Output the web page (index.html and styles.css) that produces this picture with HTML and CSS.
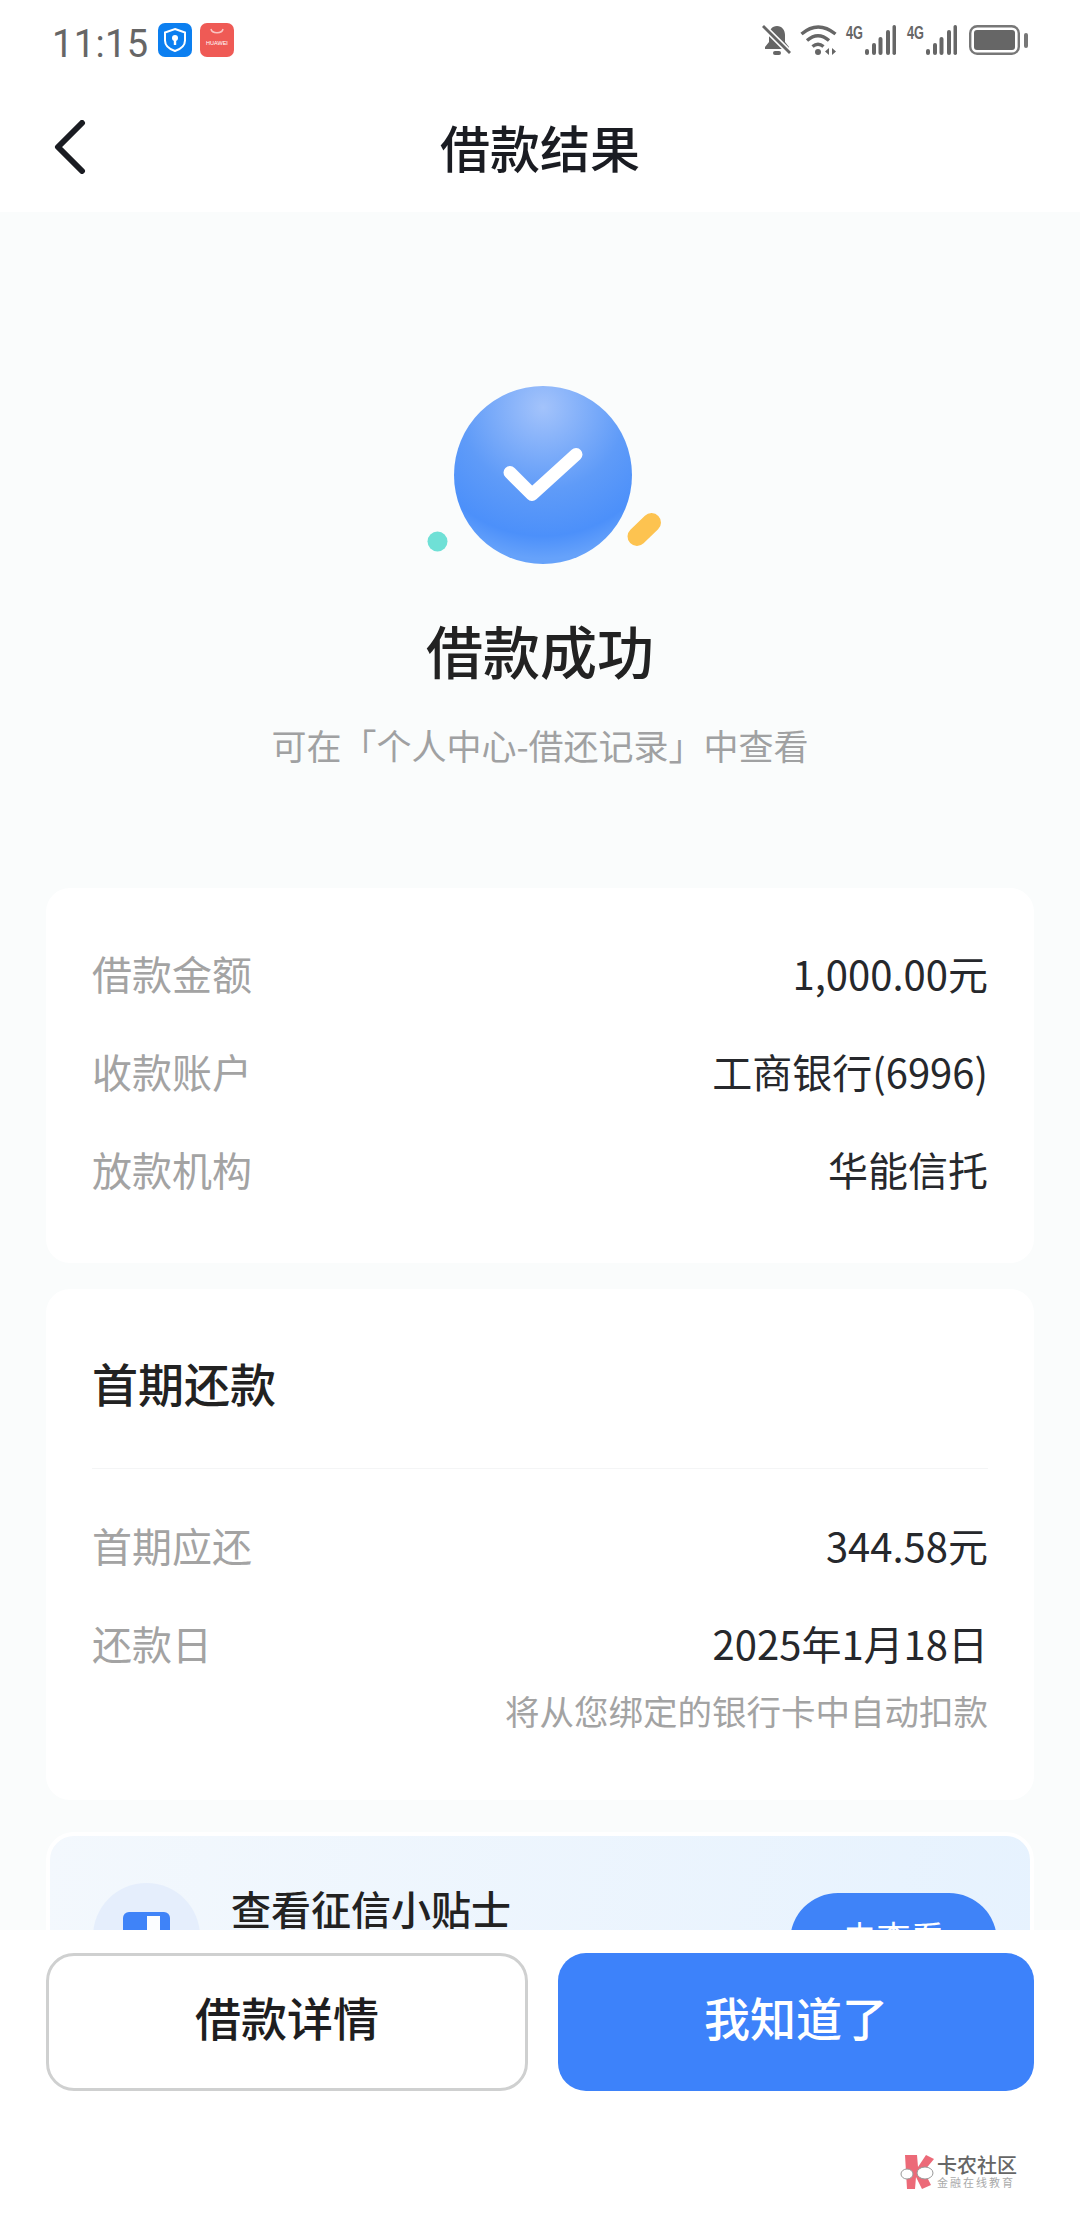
FILE: index.html
```html
<!DOCTYPE html>
<html lang="zh">
<head>
<meta charset="utf-8">
<title>借款结果</title>
<link rel="stylesheet" href="styles.css">
</head>
<body>
<div class="phone">
  <header class="top">
    <div class="status">
      <div class="status-left">
        <span class="time">11:15</span>
        <svg class="app" viewBox="0 0 34 34"><rect width="34" height="34" rx="7" fill="#0c7ff0"/><path d="M17 6l10 3.500v8c0 5-4 8.500-10 10.500C11 26 7 22.500 7 17.500v-8z" fill="none" stroke="#fff" stroke-width="2"/><circle cx="17" cy="15" r="3" fill="#fff"/><rect x="15.800" y="15" width="2.400" height="7" fill="#fff"/></svg>
        <svg class="app" viewBox="0 0 34 34"><rect width="34" height="34" rx="7" fill="#ef5a55"/><path d="M11 6c1 5 11 5 12 0" fill="none" stroke="#f9c4c1" stroke-width="1.500"/><text x="17" y="22" class="hw">HUAWEI</text></svg>
      </div>
      <div class="status-right">
        <svg class="ic-bell" viewBox="0 0 30 30"><path d="M15 1c5 0 8 4 8 9v7l4 5v2H3v-2l4-5v-7c0-5 3-9 8-9z" fill="#666"/><rect x="11" y="26" width="8" height="4" rx="2" fill="#666"/><path d="M1 1l27 27" stroke="#fff" stroke-width="6"/><path d="M1 1l27 27" stroke="#666" stroke-width="2.800"/></svg>
        <svg class="ic-wifi" viewBox="0 0 38 30"><path d="M1.500 9Q18-5 35.500 9M7 15.500Q18 6 29 15.500M12.500 21.500Q18 17 23.500 21.500" fill="none" stroke="#666" stroke-width="3.400"/><circle cx="18" cy="27" r="3" fill="#666"/><path d="M29 23v7l-4-3.500zM32 23v7l4-3.500z" fill="#666"/></svg>
        <svg class="ic-sig" viewBox="0 0 50 30"><text x="0" y="14" class="four" textLength="17" lengthAdjust="spacingAndGlyphs">4G</text><rect x="19" y="24" width="4" height="6" rx="2" fill="#666"/><rect x="26" y="18" width="4" height="12" rx="2" fill="#666"/><rect x="32.500" y="12" width="4" height="18" rx="2" fill="#666"/><rect x="40" y="5" width="4" height="25" rx="2" fill="#666"/><rect x="46.500" y="0" width="3.500" height="30" rx="1.700" fill="#666"/></svg>
        <svg class="ic-sig ic-sig-2" viewBox="0 0 50 30"><text x="0" y="14" class="four" textLength="17" lengthAdjust="spacingAndGlyphs">4G</text><rect x="19" y="24" width="4" height="6" rx="2" fill="#666"/><rect x="26" y="18" width="4" height="12" rx="2" fill="#666"/><rect x="32.500" y="12" width="4" height="18" rx="2" fill="#666"/><rect x="40" y="5" width="4" height="25" rx="2" fill="#666"/><rect x="46.500" y="0" width="3.500" height="30" rx="1.700" fill="#666"/></svg>
        <svg class="ic-bat" viewBox="0 0 59 30"><rect x="1.200" y="1.200" width="48.600" height="27.600" rx="7" fill="none" stroke="#777" stroke-width="2.400"/><rect x="5" y="5" width="41" height="20" rx="3" fill="#666"/><rect x="55" y="8" width="4" height="15" rx="2" fill="#777"/></svg>
      </div>
    </div>
    <div class="nav">
      <svg class="back" viewBox="0 0 32 54"><path d="M28 3L4 27l24 24" fill="none" stroke="#1a1c22" stroke-width="6" stroke-linecap="round" stroke-linejoin="round"/></svg>
      <h1 class="nav-title">借款结果</h1>
    </div>
  </header>

  <main class="content">
    <section class="result">
      <svg class="hero" viewBox="0 0 240 180">
        <defs>
          <radialGradient id="ball" cx="50%" cy="12%" r="85%">
            <stop offset="0" stop-color="#a3c3fb"/>
            <stop offset="0.55" stop-color="#5f9bf8"/>
            <stop offset="0.85" stop-color="#4c90fa"/>
            <stop offset="1" stop-color="#66a2fa"/>
          </radialGradient>
        </defs>
        <circle cx="121" cy="89" r="89" fill="url(#ball)"/>
        <path d="M88 86.500l22 22 44-40" fill="none" stroke="#fff" stroke-width="13" stroke-linecap="round" stroke-linejoin="round"/>
        <circle cx="15.500" cy="155.500" r="10" fill="#6fe0d6"/>
        <path d="M215 150.500l14.500-14" stroke="#fdc350" stroke-width="19" stroke-linecap="round"/>
      </svg>
      <h2 class="result-title">借款成功</h2>
      <p class="result-sub">可在「个人中心-借还记录」中查看</p>
    </section>

    <section class="card info">
      <div class="row"><span class="label">借款金额</span><span class="value">1,000.00元</span></div>
      <div class="row"><span class="label">收款账户</span><span class="value">工商银行(6996)</span></div>
      <div class="row"><span class="label">放款机构</span><span class="value">华能信托</span></div>
    </section>

    <section class="card first">
      <h3 class="card-title">首期还款</h3>
      <div class="rows">
        <div class="row"><span class="label">首期应还</span><span class="value">344.58元</span></div>
        <div class="row"><span class="label">还款日</span><span class="value">2025年1月18日</span></div>
      </div>
      <p class="note">将从您绑定的银行卡中自动扣款</p>
    </section>

    <section class="tip">
      <div class="tip-icon"><span class="tip-doc"></span></div>
      <div class="tip-title">查看征信小贴士</div>
      <div class="tip-btn">去查看</div>
    </section>
  </main>

  <footer class="bottom">
    <div class="actions">
      <button class="btn btn-ghost">借款详情</button>
      <button class="btn btn-main">我知道了</button>
    </div>
    <div class="mark">
      <svg class="mark-logo" viewBox="0 0 36 34"><path d="M5 0h12l1 12 8-12 8 4-10 12 7 14-9 4-6-12-1 12H7z" fill="#ec6a78"/><ellipse cx="7" cy="19" rx="6" ry="5" fill="#fff" stroke="#999" stroke-width="1"/><ellipse cx="25" cy="18" rx="8" ry="6" fill="#fff" stroke="#999" stroke-width="1"/></svg>
      <div class="mark-text">
        <span class="mark-name">卡农社区</span>
        <span class="mark-sub">金融在线教育</span>
      </div>
    </div>
  </footer>
</div>
</body>
</html>
```

FILE: styles.css
```css
* { box-sizing: border-box; }
html, body { margin: 0; padding: 0; }
body {
  width: 1080px;
  height: 2240px;
  overflow: hidden;
  background: #fafcfc;
  font-family: "Noto Sans CJK SC", "Noto Sans", sans-serif;
}
.phone {
  width: 1080px;
  height: 2240px;
  display: flex;
  flex-direction: column;
  position: relative;
  overflow: hidden;
}
.top { background: #fff; height: 212px; flex: none; }
.status {
  height: 62px;
  padding: 21px 52px 0 52px;
  display: flex;
  justify-content: space-between;
  align-items: flex-start;
}
.status-left { display: flex; align-items: center; gap: 8px; height: 46px; }
.time {
  font-family: Roboto, sans-serif;
  font-size: 38px;
  letter-spacing: 0.400px;
  color: #666;
  width: 98px;
}
.app { width: 34px; height: 34px; display: block; margin-top: -8px; }
.hw { font: 5.500px "Liberation Sans", sans-serif; fill: #fff; text-anchor: middle; }
.status-right { display: flex; align-items: center; gap: 8px; height: 38px; }
.ic-bell { width: 30px; height: 30px; }
.ic-wifi { width: 38px; height: 30px; }
.ic-sig { width: 50px; height: 30px; overflow: visible; }
.ic-sig-2 { margin-left: 3px; }
.four { font: bold 19px "Liberation Sans", sans-serif; fill: #666; }
.ic-bat { width: 59px; height: 30px; margin-left: 4px; }
.nav {
  height: 150px;
  position: relative;
  display: flex;
  align-items: center;
  justify-content: center;
  padding-top: 18px;
}
.back { position: absolute; left: 54px; top: 58px; width: 32px; height: 54px; }
.nav-title {
  margin: 0;
  font-size: 50px;
  line-height: 60px;
  font-weight: 500;
  color: #1a1c22;
}
.content { padding: 0 46px; flex: 1; min-height: 0; }
.result { display: flex; flex-direction: column; align-items: center; padding-top: 174px; }
.hero { width: 240px; height: 180px; display: block; margin-left: 4px; overflow: visible; }
.result-title {
  margin: 41px 0 0;
  font-size: 57px;
  line-height: 84px;
  font-weight: 500;
  color: #222;
}
.result-sub {
  margin: 30px 0 0;
  font-size: 35px;
  line-height: 48px;
  color: #a0a1a2;
}
.card { background: #fff; border-radius: 24px; padding: 0 46px; }
.info {
  margin-top: 119px;
  height: 375px;
  padding-top: 36px;
}
.row {
  display: flex;
  justify-content: space-between;
  align-items: center;
  height: 98px;
}
.label { font-size: 40px; color: #a3a3a3; }
.value { font-size: 40px; color: #26282c; }
.first { margin-top: 26px; height: 511px; }
.card-title {
  margin: 0;
  height: 180px;
  padding-top: 63px;
  line-height: 60px;
  font-size: 46px;
  font-weight: 500;
  color: #222;
  border-bottom: 1px solid #f4f5f6;
}
.rows { padding-top: 27px; }
.note {
  margin: -6px 0 0;
  font-size: 34.500px;
  line-height: 48px;
  color: #a3a3a3;
  text-align: right;
}
.tip {
  margin-top: 32px;
  height: 220px;
  border-radius: 28px;
  background: linear-gradient(100deg, #f3f8fd, #e6f2fe);
  border: 4px solid #fff;
  display: flex;
  align-items: flex-start;
  padding: 47px 33px 0 43px;
}
.tip-icon {
  width: 107px;
  height: 107px;
  border-radius: 50%;
  background: #e5eefc;
  display: flex;
  justify-content: center;
  padding-top: 29px;
  flex: none;
}
.tip-doc {
  width: 47px;
  height: 60px;
  background: #3f83f8;
  border-radius: 6px;
  position: relative;
}
.tip-doc::after {
  content: "";
  position: absolute;
  left: 24px;
  top: 4px;
  width: 13px;
  height: 50px;
  background: #fbfdff;
}
.tip-title {
  margin-left: 31px;
  margin-top: -3px;
  font-size: 40px;
  line-height: 56px;
  font-weight: 500;
  color: #222;
  flex: 1;
}
.tip-btn {
  width: 207px;
  height: 96px;
  border-radius: 48px;
  background: #3f83f8;
  color: #fff;
  font-size: 34px;
  text-align: center;
  line-height: 88px;
  margin-top: 10px;
}
.bottom {
  position: absolute;
  left: 0;
  right: 0;
  bottom: 0;
  height: 310px;
  background: #fff;
  padding: 23px 46px 0;
}
.actions { display: flex; gap: 30px; }
.btn {
  flex: 1;
  height: 138px;
  border-radius: 28px;
  font-family: inherit;
  font-size: 46px;
  font-weight: 500;
  padding: 0 0 12px;
}
.btn-ghost { background: #fff; border: 3px solid #cfd0d0; color: #1e1e20; }
.btn-main { background: #3d82fa; border: 0; color: #fff; }
.mark {
  position: absolute;
  left: 900px;
  top: 223px;
  display: flex;
  align-items: center;
  gap: 1px;
}
.mark-logo { width: 36px; height: 34px; display: block; }
.mark-text { display: flex; flex-direction: column; padding-top: 2px; }
.mark-name { font-size: 20px; line-height: 20px; font-weight: 500; color: #666; }
.mark-sub { font-size: 11px; line-height: 15px; color: #aaa; letter-spacing: 2px; }
```
